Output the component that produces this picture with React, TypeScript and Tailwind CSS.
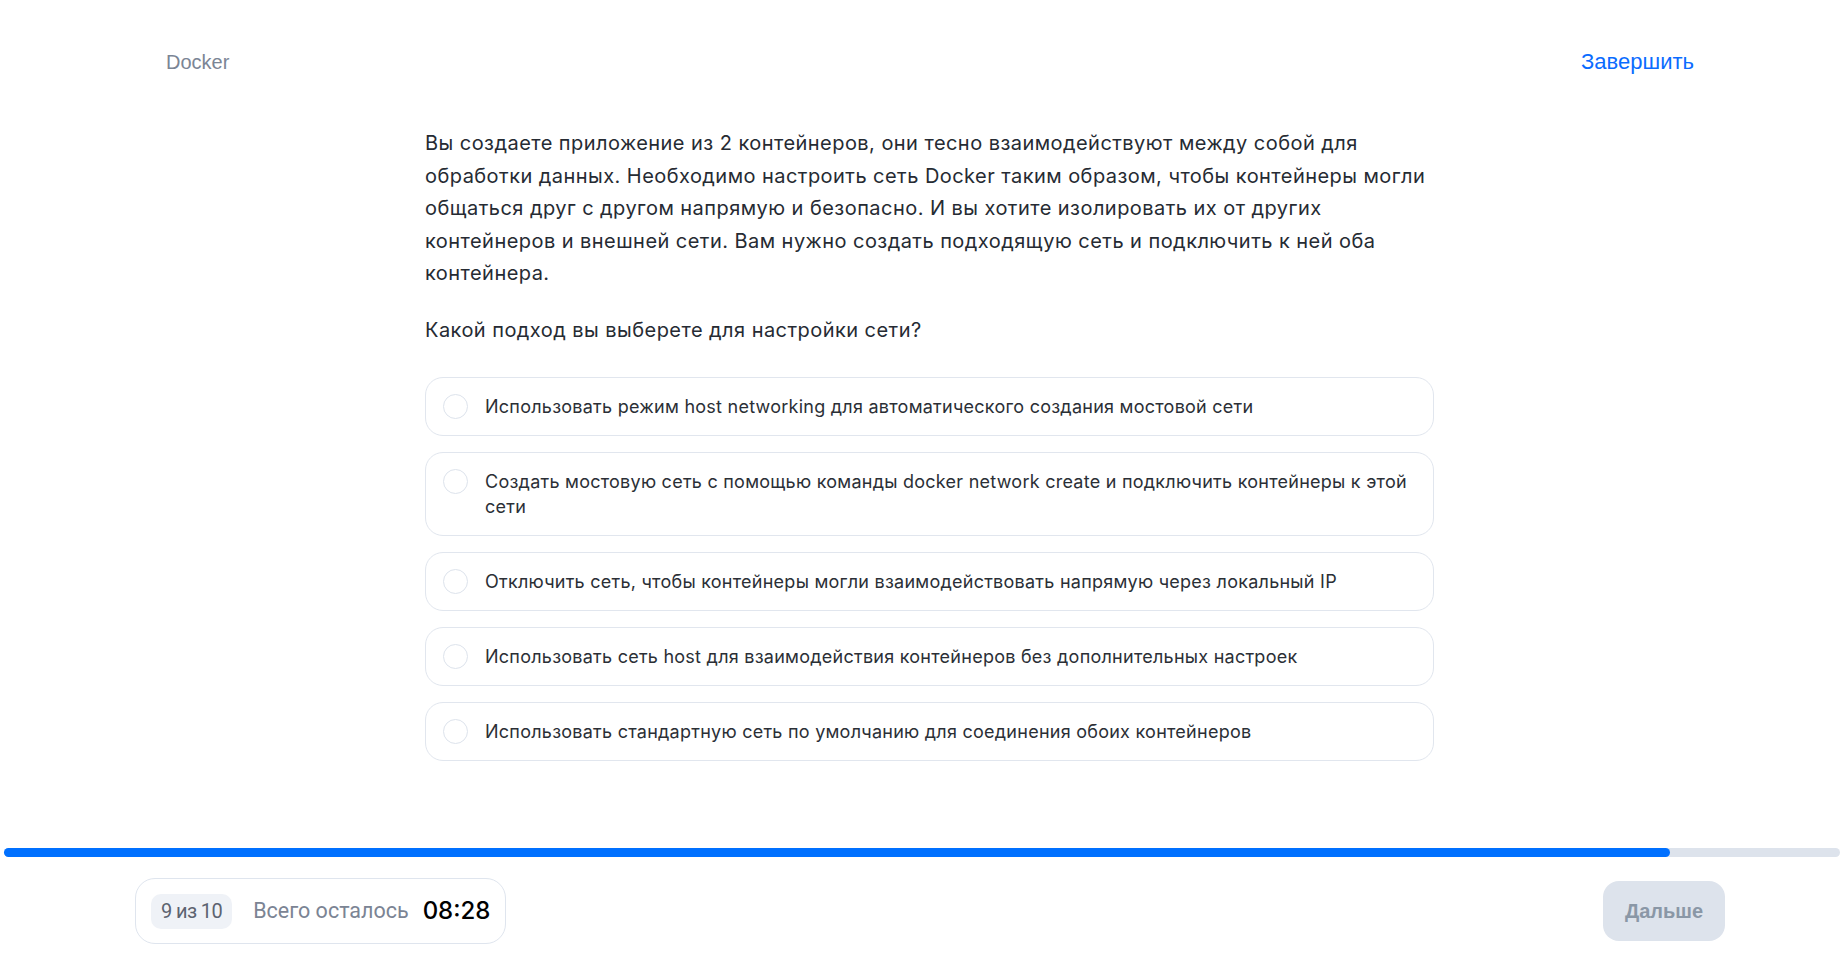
import { useState } from "react";

const options = [
  "Использовать режим host networking для автоматического создания мостовой сети",
  "Создать мостовую сеть с помощью команды docker network create и подключить контейнеры к этой сети",
  "Отключить сеть, чтобы контейнеры могли взаимодействовать напрямую через локальный IP",
  "Использовать сеть host для взаимодействия контейнеров без дополнительных настроек",
  "Использовать стандартную сеть по умолчанию для соединения обоих контейнеров",
];

export default function App() {
  const [selected, setSelected] = useState<number | null>(null);

  return (
    <div className="flex h-screen flex-col bg-white font-['Inter','Liberation_Sans',sans-serif]">
      <header className="flex items-center justify-between pl-[166px] pr-[146px] pt-[48px]">
        <span className="font-['Liberation_Sans',Arial,sans-serif] text-[20px] leading-[28px] text-[#7b8595]">
          Docker
        </span>
        <button className="font-['Liberation_Sans',Arial,sans-serif] text-[22px] leading-[28px] text-[#0b6cff]">
          Завершить
        </button>
      </header>

      <main className="flex-1">
        <div className="ml-[425px] mt-[51px] w-[1009px]">
          <p className="text-[20px] leading-[32.5px] tracking-[0.45px] text-[#262b33]">
            Вы создаете приложение из 2 контейнеров, они тесно взаимодействуют между собой для
            обработки данных. Необходимо настроить сеть Docker таким образом, чтобы контейнеры могли
            общаться друг с другом напрямую и безопасно. И вы хотите изолировать их от других
            контейнеров и внешней сети. Вам нужно создать подходящую сеть и подключить к ней оба
            контейнера.
          </p>
          <p className="mt-[24px] text-[20px] leading-[32.5px] tracking-[0.45px] text-[#262b33]">
            Какой подход вы выберете для настройки сети?
          </p>

          <div className="mt-[31px] flex flex-col gap-[16px]">
            {options.map((opt, i) => (
              <button
                key={i}
                onClick={() => setSelected(i)}
                className="flex items-start gap-[17px] rounded-[18px] border border-[#e1e6ee] bg-white py-[16px] pl-[17px] pr-[16px] text-left"
              >
                <span
                  className={
                    selected === i
                      ? "h-[25px] w-[25px] shrink-0 rounded-full border-[7px] border-[#0b6cff]"
                      : "h-[25px] w-[25px] shrink-0 rounded-full border border-[#dde3ec]"
                  }
                />
                <span className="text-[18px] leading-[25px] tracking-[0.25px] text-[#2b2f36]">{opt}</span>
              </button>
            ))}
          </div>
        </div>
      </main>

      <footer className="pb-[21px]">
        <div className="ml-[4px] h-[9px] rounded-full bg-[#dde3ec]">
          <div className="h-full w-[90.75%] rounded-full bg-[#0070ff]" />
        </div>
        <div className="mt-[21px] flex items-center justify-between pl-[135px] pr-[115px]">
          <div className="flex h-[66px] items-center whitespace-nowrap rounded-[20px] border border-[#dfe5ee] pl-[15px] pr-[15px]">
            <span className="flex h-[35px] items-center rounded-[10px] bg-[#eff2f7] px-[10px] font-['Roboto',sans-serif] text-[20px] tracking-[-0.6px] text-[#5c6370]">
              9 из 10
            </span>
            <span className="ml-[21px] font-['Roboto',sans-serif] text-[21.5px] text-[#7b8494]">
              Всего осталось
            </span>
            <span className="ml-[14px] text-[24px] font-medium text-black">
              08:28
            </span>
          </div>
          <button className="flex h-[60px] w-[122px] items-center justify-center rounded-[16px] bg-[#dde3ec] font-['Liberation_Sans',Arial,sans-serif] text-[20px] font-bold text-[#8a97a6]">
            Дальше
          </button>
        </div>
      </footer>
    </div>
  );
}
